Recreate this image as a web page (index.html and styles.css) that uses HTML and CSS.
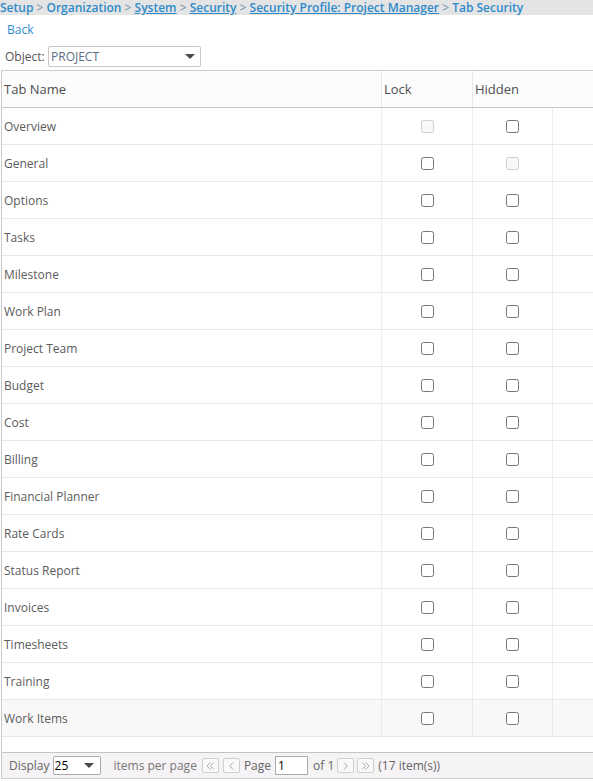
FILE: index.html
```html
<!DOCTYPE html>
<html>
<head>
<meta charset="utf-8">
<link rel="stylesheet" href="styles.css">
</head>
<body>
<div class="crumbs">
  <span class="plain">Setup</span> <span class="sep">&gt;</span>
  <span class="plain">Organization</span> <span class="sep">&gt;</span>
  <a class="link">System</a> <span class="sep">&gt;</span>
  <a class="link">Security</a> <span class="sep">&gt;</span>
  <a class="link">Security Profile: Project Manager</a> <span class="sep">&gt;</span>
  <span class="plain">Tab Security</span>
</div>
<div class="back"><a class="back-link">Back</a></div>
<div class="object-row">
  <span class="object-label">Object:</span>
  <div class="select select-object">
    <span class="select-text">PROJECT</span>
    <span class="caret"></span>
  </div>
</div>
<div class="grid">
  <div class="head">
    <div class="hcell c1">Tab Name</div>
    <div class="hcell c2">Lock</div>
    <div class="hcell c3">Hidden</div>
  </div>
  <div class="body">
    <div class="row"><div class="cell c1">Overview</div><div class="cell c2"><input type="checkbox" disabled></div><div class="cell c3"><input type="checkbox"></div><div class="cell c4"></div></div>
    <div class="row"><div class="cell c1">General</div><div class="cell c2"><input type="checkbox"></div><div class="cell c3"><input type="checkbox" disabled></div><div class="cell c4"></div></div>
    <div class="row"><div class="cell c1">Options</div><div class="cell c2"><input type="checkbox"></div><div class="cell c3"><input type="checkbox"></div><div class="cell c4"></div></div>
    <div class="row"><div class="cell c1">Tasks</div><div class="cell c2"><input type="checkbox"></div><div class="cell c3"><input type="checkbox"></div><div class="cell c4"></div></div>
    <div class="row"><div class="cell c1">Milestone</div><div class="cell c2"><input type="checkbox"></div><div class="cell c3"><input type="checkbox"></div><div class="cell c4"></div></div>
    <div class="row"><div class="cell c1">Work Plan</div><div class="cell c2"><input type="checkbox"></div><div class="cell c3"><input type="checkbox"></div><div class="cell c4"></div></div>
    <div class="row"><div class="cell c1">Project Team</div><div class="cell c2"><input type="checkbox"></div><div class="cell c3"><input type="checkbox"></div><div class="cell c4"></div></div>
    <div class="row"><div class="cell c1">Budget</div><div class="cell c2"><input type="checkbox"></div><div class="cell c3"><input type="checkbox"></div><div class="cell c4"></div></div>
    <div class="row"><div class="cell c1">Cost</div><div class="cell c2"><input type="checkbox"></div><div class="cell c3"><input type="checkbox"></div><div class="cell c4"></div></div>
    <div class="row"><div class="cell c1">Billing</div><div class="cell c2"><input type="checkbox"></div><div class="cell c3"><input type="checkbox"></div><div class="cell c4"></div></div>
    <div class="row"><div class="cell c1">Financial Planner</div><div class="cell c2"><input type="checkbox"></div><div class="cell c3"><input type="checkbox"></div><div class="cell c4"></div></div>
    <div class="row"><div class="cell c1">Rate Cards</div><div class="cell c2"><input type="checkbox"></div><div class="cell c3"><input type="checkbox"></div><div class="cell c4"></div></div>
    <div class="row"><div class="cell c1">Status Report</div><div class="cell c2"><input type="checkbox"></div><div class="cell c3"><input type="checkbox"></div><div class="cell c4"></div></div>
    <div class="row"><div class="cell c1">Invoices</div><div class="cell c2"><input type="checkbox"></div><div class="cell c3"><input type="checkbox"></div><div class="cell c4"></div></div>
    <div class="row"><div class="cell c1">Timesheets</div><div class="cell c2"><input type="checkbox"></div><div class="cell c3"><input type="checkbox"></div><div class="cell c4"></div></div>
    <div class="row"><div class="cell c1">Training</div><div class="cell c2"><input type="checkbox"></div><div class="cell c3"><input type="checkbox"></div><div class="cell c4"></div></div>
    <div class="row row-hover"><div class="cell c1">Work Items</div><div class="cell c2"><input type="checkbox"></div><div class="cell c3"><input type="checkbox"></div><div class="cell c4"></div></div>
  </div>
  <div class="pager">
    <span class="pg-label">Display</span>
    <div class="select select-size">
      <span class="select-num">25</span>
      <span class="caret"></span>
    </div>
    <span class="pg-ipp">items per page</span>
    <span class="pg-btn pg-first"><svg width="9" height="8" viewBox="0 0 9 8"><path d="M4.5 0.5 L1 4 L4.5 7.5 M8 0.5 L4.5 4 L8 7.5" fill="none" stroke="#a8a8a8" stroke-width="1"/></svg></span>
    <span class="pg-btn pg-prev"><svg width="5" height="8" viewBox="0 0 5 8"><path d="M4 0.5 L0.8 4 L4 7.5" fill="none" stroke="#a8a8a8" stroke-width="1"/></svg></span>
    <span class="pg-page">Page</span>
    <span class="pg-input">1</span>
    <span class="pg-of">of 1</span>
    <span class="pg-btn pg-next"><svg width="5" height="8" viewBox="0 0 5 8"><path d="M1 0.5 L4.2 4 L1 7.5" fill="none" stroke="#a8a8a8" stroke-width="1"/></svg></span>
    <span class="pg-btn pg-last"><svg width="9" height="8" viewBox="0 0 9 8"><path d="M1 0.5 L4.5 4 L1 7.5 M4.5 0.5 L8 4 L4.5 7.5" fill="none" stroke="#a8a8a8" stroke-width="1"/></svg></span>
    <span class="pg-count">(17 item(s))</span>
  </div>
</div>
</body>
</html>
```

FILE: styles.css
```css
html, body {
  margin: 0;
  padding: 0;
  background: #ffffff;
}
body {
  font-family: "Open Sans", "Liberation Sans", sans-serif;
  font-size: 12px;
  color: #555555;
}
.crumbs {
  height: 15px;
  line-height: 15px;
  background: #e4e4e4;
  color: #2e8bcb;
  font-size: 12px;
  font-weight: 600;
  white-space: nowrap;
  overflow: hidden;
}
.crumbs .sep {
  color: #6f8ea8;
  font-weight: 400;
}
.crumbs .link {
  text-decoration: underline;
  color: #2e8bcb;
}
.back {
  padding: 7px 0 0 7px;
  line-height: 16px;
}
.back-link {
  color: #2e8bcb;
  font-size: 12px;
}
.object-row {
  display: flex;
  align-items: center;
  margin-top: 8px;
  height: 21px;
  padding-left: 5px;
}
.object-label {
  width: 43px;
  color: #555;
}
.select {
  display: flex;
  align-items: center;
  box-sizing: border-box;
  border: 1px solid #c7c7c7;
  background: #fff;
  border-radius: 2px;
}
.select-object {
  width: 153px;
  height: 21px;
  padding-left: 2px;
  justify-content: space-between;
  padding-right: 5px;
}
.select-text {
  color: #5a6d82;
}
.caret {
  width: 0;
  height: 0;
  border-left: 5px solid transparent;
  border-right: 5px solid transparent;
  border-top: 5px solid #4a4a4a;
}
.grid {
  margin-top: 3px;
  margin-left: 1px;
  border-left: 1px solid #c9c9c9;
}
.head {
  display: grid;
  grid-template-columns: 380px 91px 1fr;
  border-top: 1px solid #cccccc;
  border-bottom: 1px solid #c6c6c6;
  background: #fcfcfc;
}
.hcell {
  height: 36px;
  box-sizing: border-box;
  display: flex;
  align-items: center;
  padding-left: 2px;
  font-size: 13px;
  color: #4f4f4f;
}
.hcell.c1, .hcell.c2 {
  border-right: 1px solid #e8e8e8;
}
.body {
  height: 644px;
}
.row {
  display: grid;
  grid-template-columns: 380px 91px 80px 1fr;
  border-bottom: 1px solid #e9e9e9;
}
.row-hover {
  background: #f8f8f8;
}
.cell {
  height: 36px;
  box-sizing: border-box;
  display: flex;
  align-items: center;
}
.cell.c1 {
  padding-left: 2px;
  color: #5c5c5c;
}
.cell.c2, .cell.c3 {
  padding-top: 1px;
}
.cell.c1, .cell.c2, .cell.c3 {
  border-right: 1px solid #ececec;
}
.cell.c2, .cell.c3 {
  justify-content: center;
}
.cell input {
  margin: 0;
  width: 13px;
  height: 13px;
}
.pager {
  display: flex;
  align-items: center;
  height: 25px;
  background: #f5f3f5;
  border-top: 1px solid #c4c4c4;
  border-bottom: 1px solid #cfcfcf;
  padding-left: 7px;
  color: #666;
}
.pg-label {
  margin-right: 3px;
}
.select-size {
  width: 48px;
  height: 19px;
  padding-left: 1px;
  padding-right: 6px;
  justify-content: space-between;
  border-color: #aaaaaa;
}
.select-num {
  color: #000;
}
.pg-ipp {
  margin-left: 13px;
  margin-right: 5px;
  color: #777;
}
.pg-btn {
  box-sizing: border-box;
  width: 17px;
  height: 15px;
  border: 1px solid #cfcfcf;
  border-radius: 2px;
  background: #f9f9f9;
  display: flex;
  align-items: center;
  justify-content: center;
}
.pg-prev { margin-left: 4px; }
.pg-page { margin-left: 4px; }
.pg-input {
  box-sizing: border-box;
  width: 33px;
  height: 19px;
  border: 1px solid #aaaaaa;
  background: #fff;
  margin-left: 4px;
  padding-left: 2px;
  line-height: 17px;
  color: #000;
}
.pg-of { margin-left: 5px; margin-right: 3px; }
.pg-last { margin-left: 3px; }
.pg-count { margin-left: 4px; }
```
